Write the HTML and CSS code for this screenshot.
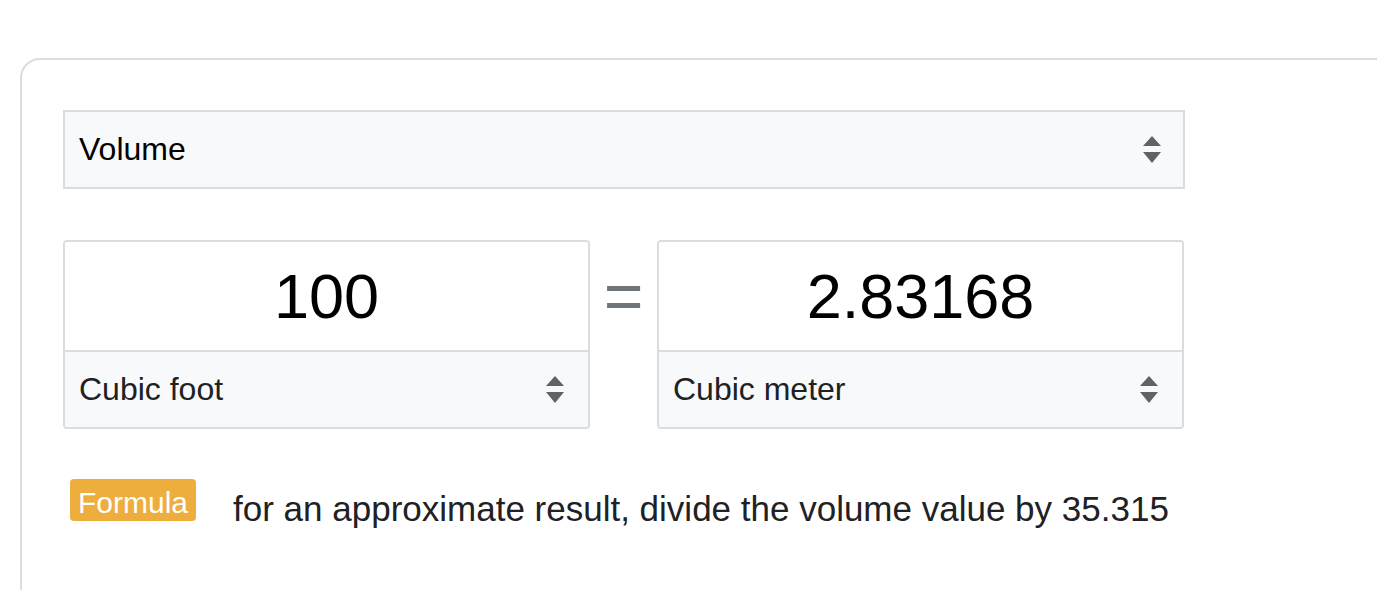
FILE: index.html
```html
<!DOCTYPE html>
<html>
<head>
<meta charset="utf-8">
<link rel="stylesheet" href="styles.css">
</head>
<body>
<div class="card">
  <div class="select big">
    <span class="label">Volume</span>
    <svg class="chev" width="18" height="28" viewBox="0 0 18 28"><path d="M9 0 L18 10 L0 10 Z M0 16 L18 16 L9 27 Z" fill="#5f6368"/></svg>
  </div>
  <div class="row">
    <div class="conv">
      <div class="value">100</div>
      <div class="select unit">
        <span class="label">Cubic foot</span>
        <svg class="chev" width="18" height="28" viewBox="0 0 18 28"><path d="M9 0 L18 10 L0 10 Z M0 16 L18 16 L9 27 Z" fill="#5f6368"/></svg>
      </div>
    </div>
    <div class="eq">=</div>
    <div class="conv">
      <div class="value">2.83168</div>
      <div class="select unit">
        <span class="label">Cubic meter</span>
        <svg class="chev" width="18" height="28" viewBox="0 0 18 28"><path d="M9 0 L18 10 L0 10 Z M0 16 L18 16 L9 27 Z" fill="#5f6368"/></svg>
      </div>
    </div>
  </div>
  <div class="formula">
    <span class="badge">Formula</span>
    <span class="ftext">for an approximate result, divide the volume value by 35.315</span>
  </div>
</div>
</body>
</html>
```
FILE: styles.css
```css
html, body {
  margin: 0;
  padding: 0;
  overflow: hidden;
  height: 590px;
  background: #fff;
  font-family: "Liberation Sans", Arial, sans-serif;
  color: #202124;
}
.card {
  margin: 58px 0 0 20px;
  width: 1420px;
  height: 600px;
  box-sizing: border-box;
  border: 2px solid #dadce0;
  border-radius: 20px;
  padding: 50px 0 0 41px;
}
.select {
  display: flex;
  align-items: center;
  justify-content: space-between;
  background: #f8f9fa;
  box-sizing: border-box;
  font-size: 32px;
  color: #000;
}
.select.big {
  width: 1122px;
  height: 79px;
  border: 2px solid #dadce0;
  padding: 0 22px 0 14px;
}
.chev {
  display: block;
}
.row {
  display: flex;
  align-items: flex-start;
  margin-top: 51px;
}
.conv {
  width: 527px;
  height: 189px;
  box-sizing: border-box;
  border: 2px solid #dadce0;
  border-radius: 4px;
  overflow: hidden;
  display: flex;
  flex-direction: column;
}
.value {
  height: 108px;
  display: flex;
  align-items: center;
  justify-content: center;
  font-size: 63px;
  color: #000;
  background: #fff;
}
.select.unit {
  flex: 1;
  border-top: 2px solid #dadce0;
  padding: 0 24px 0 14px;
  color: #202124;
}
.eq {
  width: 67px;
  text-align: center;
  font-size: 68px;
  color: #70757a;
  line-height: 1;
  margin-top: 22px;
}
.formula {
  display: flex;
  align-items: flex-start;
  margin-top: 50px;
  margin-left: 7px;
}
.badge {
  background: #eeae3e;
  color: #fff;
  font-size: 30px;
  border-radius: 4px;
  padding: 7px 8px 1px 8px;
  line-height: 34px;
}
.ftext {
  margin-left: 37px;
  font-size: 35px;
  line-height: 40px;
  margin-top: 10px;
  color: #202124;
}
```
